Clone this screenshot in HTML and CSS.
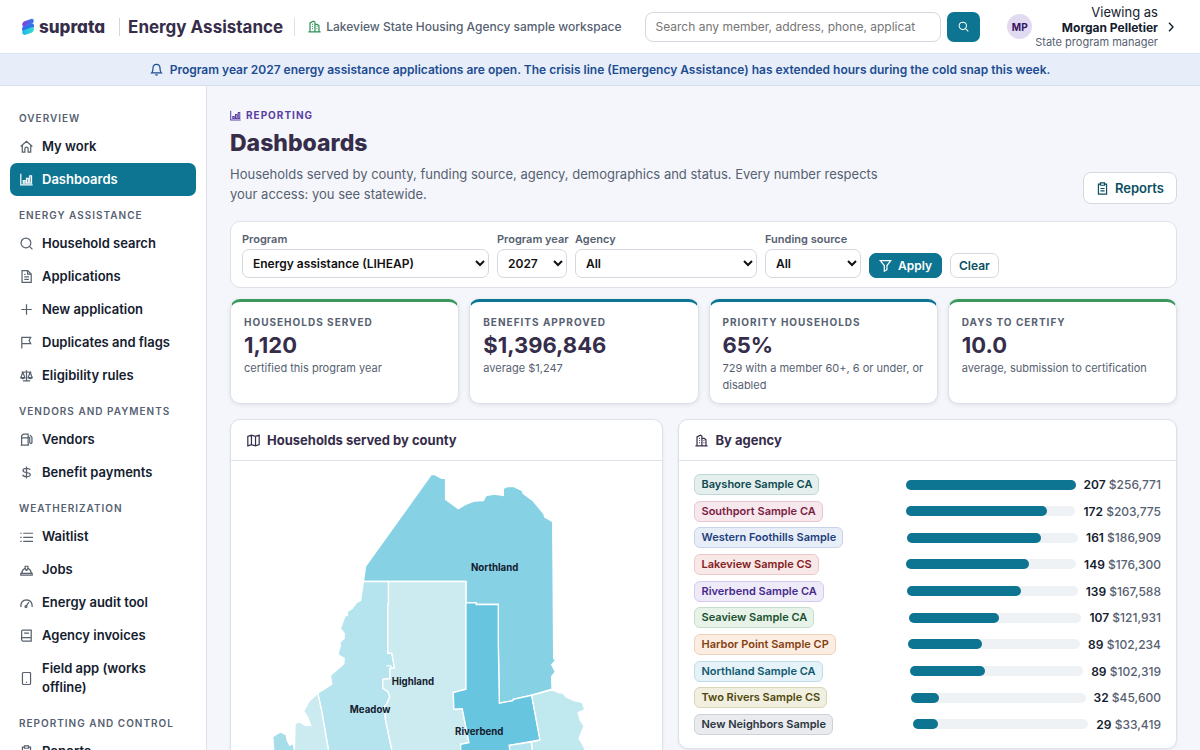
FILE: index.html
```html
<!DOCTYPE html>
<html lang="en">
<head>
<meta charset="utf-8">
<meta name="viewport" content="width=device-width, initial-scale=1">
<title>Dashboards - Energy Assistance</title>
<link rel="stylesheet" href="styles.css">
</head>
<body>
<header class="topbar">
  <a class="brand" href="#">
    <svg class="brand-mark" viewBox="0 0 14 18" aria-hidden="true">
      <defs>
        <linearGradient id="g1" x1="0" x2="1"><stop offset="0" stop-color="#8a3ad6"/><stop offset="1" stop-color="#2b7ff0"/></linearGradient>
        <linearGradient id="g2" x1="0" x2="1"><stop offset="0" stop-color="#1fb6e8"/><stop offset="1" stop-color="#35dcd0"/></linearGradient>
      </defs>
      <path d="M1.500 8 Q.6 4.600 3.500 3.200 L10 .9 Q13 .4 12.800 3.200 Q12.800 4.800 11 5.500 L3.500 8.200 Q2 8.800 1.500 8Z" fill="url(#g1)"/>
      <path d="M2 8.500 L11 5.300 Q13.500 6 12.900 9 Q12.500 10.500 11 11 L3 14 Q1 13.500 1 11 Q1 9.200 2 8.500Z" fill="#2f6fe8"/>
      <path d="M1.200 14.500 Q1 12.600 3 11.900 L11 9.100 Q13 8.800 12.900 11.600 Q12.800 13.700 11 14.400 L4.500 16.800 Q1.500 17.500 1.200 14.500Z" fill="url(#g2)"/>
    </svg>
    <span class="brand-name">suprata</span>
  </a>
  <span class="product">Energy Assistance</span>
  <span class="workspace">
    <svg class="icon green" viewBox="0 0 16 16"><path d="M.5 14.500h15M2.500 14.500v-11l4-2 2 1v12M8.500 5.500h3l2 1.500v7.500M5 5.500h1M5 8h1M5 10.500h1M10.500 8h1M10.500 10.500h1"/></svg>
    Lakeview State Housing Agency sample workspace
  </span>
  <form class="search" onsubmit="return false">
    <input class="search-input" type="text" aria-label="Search" placeholder="Search any member, address, phone, applicat">
    <button class="search-button" aria-label="Search"><svg class="icon" viewBox="0 0 16 16"><circle cx="7" cy="7" r="5.300"/><path d="M11 11l4 4"/></svg></button>
  </form>
  <button class="user">
    <span class="avatar">MP</span>
    <span class="user-text"><span class="viewing">Viewing as</span><strong class="user-name">Morgan Pelletier</strong><span class="user-role">State program manager</span></span>
    <svg class="chevron" viewBox="0 0 8 12"><path d="M2 1.800l4 4.200-4 4.200"/></svg>
  </button>
</header>
<div class="banner">
  <svg class="icon" viewBox="0 0 16 16"><path d="M2 12.200h12c-1.200-1.200-1.700-2-1.700-5.700 0-2.700-1.700-4.800-4.300-4.800S3.700 3.800 3.700 6.500c0 3.700-.5 4.500-1.700 5.700zM6.500 14.500h3"/></svg>
  <span>Program year 2027 energy assistance applications are open. The crisis line (Emergency Assistance) has extended hours during the cold snap this week.</span>
</div>
<div class="shell">
  <nav class="sidebar">
    <h2 class="nav-heading">Overview</h2>
    <a class="nav-item" href="#"><svg class="icon" viewBox="0 0 16 16"><path d="M.8 8L8 1.500 15.200 8M2.800 6.500v8.300h3.200v-4q0-2 2-2t2 2v4h3.200V6.500"/></svg><span>My work</span></a>
    <a class="nav-item active" href="#"><svg class="icon" viewBox="0 0 16 16"><path d="M1 1v13.500h14.500M4 9.500h2.200v3H4zM8 6.500h2.200v6H8zM12 3.500h2.200v9H12z"/></svg><span>Dashboards</span></a>
    <h2 class="nav-heading">Energy assistance</h2>
    <a class="nav-item" href="#"><svg class="icon" viewBox="0 0 16 16"><circle cx="7.300" cy="7.300" r="6"/><path d="M11.600 11.600l3.700 3.700"/></svg><span>Household search</span></a>
    <a class="nav-item" href="#"><svg class="icon" viewBox="0 0 16 16"><path d="M2.500.8h7L13.800 5v10.200H2.500zM9.300 1v4.200h4.300M5.300 8.500h5.700M5.300 11.500h5.700M5.300 5.500h1.500"/></svg><span>Applications</span></a>
    <a class="nav-item" href="#"><svg class="icon" viewBox="0 0 16 16"><path d="M8 1.500v13M1.500 8h13"/></svg><span>New application</span></a>
    <a class="nav-item" href="#"><svg class="icon" viewBox="0 0 16 16"><path d="M2.200 15.500V1.700h11l-2 3.900 2 3.900h-11"/></svg><span>Duplicates and flags</span></a>
    <a class="nav-item" href="#"><svg class="icon" viewBox="0 0 16 16"><path d="M8 1.500v12.500M3.500 14.500h9M2 4h3.500L8 3l2.500 1H14M3.500 4L1 10.500h5zM12.500 4L10 10.500h5zM1 10.500q2.500 3 5 0M10 10.500q2.500 3 5 0"/></svg><span>Eligibility rules</span></a>
    <h2 class="nav-heading">Vendors and payments</h2>
    <a class="nav-item" href="#"><svg class="icon" viewBox="0 0 16 16"><path d="M.8 14.800h10.400M2 14.500V3.500l2-2h6v13M2 6h8M10 4.500l2 1.200v6.300q1.200 1.800 2.700 0V5.500L12.500 2.500"/></svg><span>Vendors</span></a>
    <a class="nav-item" href="#"><svg class="icon" viewBox="0 0 16 16"><path d="M8 .5v15M12.500 4.800C12 3.500 10.500 3 8 3 5.500 3 3.700 3.800 3.700 5.500c0 3.800 9 1.500 9 5 0 1.700-2 2.600-4.700 2.600s-4.300-.7-4.800-2.300"/></svg><span>Benefit payments</span></a>
    <h2 class="nav-heading">Weatherization</h2>
    <a class="nav-item" href="#"><svg class="icon" viewBox="0 0 16 16"><path d="M4 4H16M4 9H16M4 14H16M.3 4H2M.3 9H2M.3 14H2"/></svg><span>Waitlist</span></a>
    <a class="nav-item" href="#"><svg class="icon" viewBox="0 0 16 16"><path d="M1 15h14v-2.300H1zM2 12.500Q3 8 6.300 6.300L7.500 9h1l1.200-2.700Q13 8 14 12.500M6.300 6.500V4h3.400v2.500"/></svg><span>Jobs</span></a>
    <a class="nav-item" href="#"><svg class="icon" viewBox="0 0 16 16"><path d="M1 13.500Q.8 5 8 4.800q7.200.2 7 8.700M7.500 12.500l3.500-5"/><circle cx="7.300" cy="13" r="1.200"/></svg><span>Energy audit tool</span></a>
    <a class="nav-item" href="#"><svg class="icon" viewBox="0 0 16 16"><path d="M3.500 1.500h10.300v13.300H3.500q-1.500 0-1.500-1.500V3q0-1.500 1.500-1.500zM2 12q0-1.500 1.500-1.500h10M5 5h6M5 10.500h6"/></svg><span>Agency invoices</span></a>
    <a class="nav-item" href="#"><svg class="icon" viewBox="0 0 16 16"><rect x="3" y="0.600" width="10" height="14.800" rx="1.500"/><path d="M7.300 12.700h1.400"/></svg><span>Field app (works offline)</span></a>
    <h2 class="nav-heading">Reporting and control</h2>
    <a class="nav-item" href="#"><svg class="icon" viewBox="0 0 16 16"><path d="M5 2.500H3v12.500h10V2.500h-2M5.500 1h5v3h-5zM5.500 8h5M5.500 11h5"/></svg><span>Reports</span></a>
  </nav>
  <main class="content">
    <div class="page-head">
      <div class="page-intro">
        <p class="eyebrow"><svg class="icon" viewBox="0 0 16 16"><path d="M1 1v13.500h14.500M4 9.500h2.200v3H4zM8 6.500h2.200v6H8zM12 3.500h2.200v9H12z"/></svg>Reporting</p>
        <h1 class="title">Dashboards</h1>
        <p class="lede">Households served by county, funding source, agency, demographics and status. Every number respects your access: you see statewide.</p>
      </div>
      <a class="button reports" href="#"><svg class="icon" viewBox="0 0 16 16"><path d="M5 2.500H3v12.500h10V2.500h-2M5.500 1h5v3h-5zM5.500 8h5M5.500 11h5"/></svg>Reports</a>
    </div>
    <form class="filters" onsubmit="return false">
      <label class="field program">Program<select><option>Energy assistance (LIHEAP)</option></select></label>
      <label class="field year">Program year<select><option>2027</option></select></label>
      <label class="field agency">Agency<select><option>All</option></select></label>
      <label class="field funding">Funding source<select><option>All</option></select></label>
      <button class="button small primary"><svg class="icon" viewBox="0 0 16 16"><path d="M1.500 2h13l-4.700 6v5.200L6.500 15V8z"/></svg>Apply</button>
      <button class="button small" type="reset">Clear</button>
    </form>
    <section class="kpis">
      <article class="kpi good"><h2 class="kpi-label">Households served</h2><p class="kpi-value">1,120</p><p class="kpi-note">certified this program year</p></article>
      <article class="kpi"><h2 class="kpi-label">Benefits approved</h2><p class="kpi-value">$1,396,846</p><p class="kpi-note">average $1,247</p></article>
      <article class="kpi"><h2 class="kpi-label">Priority households</h2><p class="kpi-value">65%</p><p class="kpi-note">729 with a member 60+, 6 or under, or disabled</p></article>
      <article class="kpi good"><h2 class="kpi-label">Days to certify</h2><p class="kpi-value">10.0</p><p class="kpi-note">average, submission to certification</p></article>
    </section>
    <div class="panels">
      <section class="panel">
        <h2 class="panel-title"><svg class="icon" viewBox="0 0 16 16"><path d="M1 3l4.500-1.500 5 1.500L15 1.500V13l-4.500 1.500-5-1.500L1 14.500zM5.500 1.500V13M10.500 3v11.500"/></svg>Households served by county</h2>
        <div class="panel-body">
          <svg class="map" viewBox="80 190 1197 960" role="img" aria-label="County map">
            <path fill="#86d1e4" d="M632 195L643 195 662 205 675 207 675 269 713 297 735 284 760 274 788 273 796 258 820 253 848 257 848 236 860 231 880 231 905 243 908 252 938 274 970 313 972 322 996 336 999 746 1005 752 993 764 1004 786 993 800 994 838 935 855 878 868 877 872 836 880 833 700 833 584 767 584 767 579 736 579 736 515 429 515 435 470Z"/>
            <path fill="#b5e4ee" d="M429 515L504 515 504 580 502 582 502 730 514 730 522 774 508 776 508 806 487 808 487 835 502 845 508 860 500 880 492 890 495 930 514 1020 530 1150 345 1150 324 1020 303 900 292 850 334 823 330 797 352 777 370 762 371 745 356 737 353 730 360 707 358 698 371 686 371 670 360 656 373 620 381 616 381 605 395 596 408 578 420 572Z"/>
            <path fill="#cbebf1" d="M504 515L736 515 736 838 698 848 700 898 725 896 745 998 720 1003 723 1150 530 1150 514 1020 495 930 492 890 500 880 508 860 502 845 487 835 487 808 508 806 508 776 522 774 514 730 502 730 502 582 504 580Z"/>
            <path fill="none" d="M498 768L510 768 514 776"/>
            <path fill="#68c5df" d="M736 579L767 579 767 584 833 584 833 700 836 880 877 872 878 868 933 856 958 990 866 1006 880 1150 723 1150 720 1003 745 998 725 896 700 898 698 848 736 838Z"/>
            <path fill="#c0e8ef" d="M933 856L994 840 1018 850 1022 846 1038 862 1060 872 1085 878 1092 900 1072 908 1078 930 1090 948 1075 985 1092 1015 1060 1150 950 1150 932 996 958 990Z"/>
            <path fill="#b5e4ee" d="M866 1006L932 996 950 1150 880 1150Z"/>
            <path fill="#cbebf1" d="M292 850L303 900 324 1020 345 1150 235 1150 222 1020 224 942 236 935 255 946 271 947 262 922 250 904 265 875Z"/>
            <path fill="#a5dde9" d="M157 980L180 966 197 974 200 990 208 1006 218 1000 222 1020 235 1150 180 1150 160 1020Z"/>
            <g class="map-labels"><text x="822" y="485">Northland</text><text x="577" y="826">Highland</text><text x="449" y="909">Meadow</text><text x="776" y="975">Riverbend</text></g>
          </svg>
        </div>
      </section>
      <section class="panel">
        <h2 class="panel-title"><svg class="icon" viewBox="0 0 16 16"><path d="M.5 14.500h15M2.500 14.500v-11l4-2 2 1v12M8.500 5.500h3l2 1.500v7.500M5 5.500h1M5 8h1M5 10.500h1M10.500 8h1M10.500 10.500h1"/></svg>By agency</h2>
        <ul class="agency-list">
          <li class="row"><span class="cell"><span class="tag a1">Bayshore Sample CA</span></span><span class="track"><span class="fill" style="width:100%"></span></span><span class="amount"><b>207</b> $256,771</span></li>
          <li class="row"><span class="cell"><span class="tag a2">Southport Sample CA</span></span><span class="track"><span class="fill" style="width:83%"></span></span><span class="amount"><b>172</b> $203,775</span></li>
          <li class="row"><span class="cell"><span class="tag a3">Western Foothills Sample</span></span><span class="track"><span class="fill" style="width:78%"></span></span><span class="amount"><b>161</b> $186,909</span></li>
          <li class="row"><span class="cell"><span class="tag a4">Lakeview Sample CS</span></span><span class="track"><span class="fill" style="width:72%"></span></span><span class="amount"><b>149</b> $176,300</span></li>
          <li class="row"><span class="cell"><span class="tag a5">Riverbend Sample CA</span></span><span class="track"><span class="fill" style="width:67%"></span></span><span class="amount"><b>139</b> $167,588</span></li>
          <li class="row"><span class="cell"><span class="tag a6">Seaview Sample CA</span></span><span class="track"><span class="fill" style="width:52%"></span></span><span class="amount"><b>107</b> $121,931</span></li>
          <li class="row"><span class="cell"><span class="tag a7">Harbor Point Sample CP</span></span><span class="track"><span class="fill" style="width:43%"></span></span><span class="amount"><b>89</b> $102,234</span></li>
          <li class="row"><span class="cell"><span class="tag a8">Northland Sample CA</span></span><span class="track"><span class="fill" style="width:43%"></span></span><span class="amount"><b>89</b> $102,319</span></li>
          <li class="row"><span class="cell"><span class="tag a9">Two Rivers Sample CS</span></span><span class="track"><span class="fill" style="width:16%"></span></span><span class="amount"><b>32</b> $45,600</span></li>
          <li class="row"><span class="cell"><span class="tag a10">New Neighbors Sample</span></span><span class="track"><span class="fill" style="width:14%"></span></span><span class="amount"><b>29</b> $33,419</span></li>
        </ul>
      </section>
    </div>
  </main>
</div>
</body>
</html>
```
FILE: styles.css
```css
:root {
  --teal: #0d7491;
  --ink: #14202e;
  --heading: #362d4a;
  --muted: #566171;
  --line: #dde1e8;
  --page: #f4f6fb;
}
* { box-sizing: border-box; }
html { scrollbar-width: none; }
body {
  margin: 0;
  min-height: 100vh;
  display: flex;
  flex-direction: column;
  font-family: Inter, "Liberation Sans", sans-serif;
  font-size: 13px;
  color: var(--ink);
  background: var(--page);
}
h1, h2, p, ul { margin: 0; padding: 0; }
a { color: inherit; text-decoration: none; }
button, input, select { font: inherit; color: inherit; }
.icon {
  width: 13px;
  height: 13px;
  flex: none;
  fill: none;
  stroke: currentColor;
  stroke-width: 1.5;
}

.topbar {
  display: flex;
  align-items: center;
  height: 53px;
  padding: 0 25px 0 21px;
  background: #fff;
  white-space: nowrap;
}
.brand { display: flex; align-items: center; gap: 4px; }
.brand-mark { width: 14px; height: 18px; }
.brand-name {
  font-size: 17px;
  line-height: 20px;
  font-weight: 800;
  color: var(--heading);
  font-feature-settings: "cv11";
}
.product {
  margin-left: 14px;
  padding-left: 8px;
  border-left: 1px solid #d3d6de;
  font-size: 17px;
  line-height: 18px;
  font-weight: 700;
  color: var(--heading);
}
.workspace {
  display: flex;
  align-items: center;
  gap: 5px;
  margin-left: 11px;
  padding-left: 13px;
  border-left: 1px solid var(--line);
  line-height: 18px;
  font-size: 12px;
  font-weight: 500;
  color: var(--muted);
}
.green { color: #2f9158; }
.search { display: flex; flex: 1; gap: 6px; margin-left: 24px; }
.search-input {
  flex: 1;
  min-width: 0;
  height: 30px;
  padding: 0 12px 0 9px;
  border: 1px solid #d5d8de;
  border-radius: 8px;
  background: #fff;
  font-size: 12px;
}
.search-input::placeholder { color: #757575; opacity: 1; }
.search-button {
  display: grid;
  place-items: center;
  width: 33px;
  height: 30px;
  padding: 0;
  border: 0;
  border-radius: 7px;
  background: var(--teal);
  color: #fff;
}
.search-button .icon { width: 11px; height: 11px; }
.user {
  display: flex;
  align-items: center;
  gap: 3px;
  margin-left: 27px;
  padding: 0;
  border: 0;
  background: none;
  text-align: right;
}
.avatar {
  display: grid;
  place-items: center;
  width: 25px;
  height: 25px;
  border-radius: 50%;
  background: #e2daf1;
  font-size: 10px;
  font-weight: 700;
  color: #34155f;
}
.user-text { display: flex; flex-direction: column; }
.viewing { font-size: 13px; line-height: 15px; }
.user-name { font-size: 12px; line-height: 15px; font-weight: 700; }
.user-role { font-size: 11px; line-height: 14px; color: var(--muted); }
.chevron {
  width: 8px;
  height: 12px;
  margin-left: 6px;
  fill: none;
  stroke: currentColor;
  stroke-width: 1.4;
}

.banner {
  display: flex;
  align-items: center;
  justify-content: center;
  gap: 7px;
  height: 33px;
  border-top: 1px solid #dfe7f4;
  border-bottom: 1px solid #d5dff0;
  background: #e7eefa;
  font-size: 12px;
  font-weight: 600;
  color: #1d4c90;
}

.shell { display: flex; flex: 1; }
.sidebar {
  width: 207px;
  flex: none;
  padding: 13px 10px;
  border-right: 1px solid var(--line);
  background: #fff;
}
.nav-heading {
  padding: 11px 9px 4px;
  font-size: 10px;
  line-height: 16px;
  font-weight: 600;
  letter-spacing: 1px;
  text-transform: uppercase;
  color: var(--muted);
}
.nav-item {
  display: flex;
  align-items: center;
  gap: 9px;
  padding: 7px 15px 7px 10px;
  border-radius: 7px;
  font-size: 13px;
  line-height: 19px;
  font-weight: 600;
}
.nav-item .icon { color: #58616e; }
.nav-item.active, .nav-item.active .icon { color: #fff; }
.nav-item.active { background: var(--teal); }

.content { flex: 1; min-width: 0; padding: 21px 23px 24px; }
.page-head {
  display: flex;
  align-items: flex-end;
  justify-content: space-between;
  gap: 24px;
}
.page-intro { max-width: 665px; }
.eyebrow {
  display: flex;
  align-items: center;
  gap: 5px;
  font-size: 10px;
  line-height: 16px;
  font-weight: 700;
  letter-spacing: 1px;
  text-transform: uppercase;
  color: #5a3ea6;
}
.eyebrow .icon { width: 11px; height: 11px; }
.title {
  margin: 5px 0 6px;
  font-size: 23px;
  line-height: 30px;
  font-weight: 800;
  color: var(--heading);
}
.lede { font-size: 13px; line-height: 20px; color: var(--muted); }
.button {
  display: inline-flex;
  align-items: center;
  justify-content: center;
  gap: 6px;
  border: 1px solid #d5d8de;
  border-radius: 8px;
  background: #fff;
  font-weight: 600;
  color: #0b4f63;
}
.reports { height: 32px; padding: 0 12px; font-size: 13px; }
.small { height: 25px; padding: 0 8px; border-radius: 7px; font-size: 12px; }
.primary {
  padding: 0 9px;
  border-color: var(--teal);
  background: var(--teal);
  color: #fff;
}

.filters {
  display: flex;
  align-items: flex-end;
  gap: 8px;
  margin-top: 17px;
  padding: 10px 11px 9px;
  border: 1px solid var(--line);
  border-radius: 10px;
  background: #fff;
}
.field {
  display: flex;
  flex-direction: column;
  gap: 3px;
  font-size: 11px;
  line-height: 14px;
  font-weight: 600;
  white-space: nowrap;
  color: var(--muted);
}
.field select {
  width: 100%;
  height: 29px;
  padding: 0 6px;
  border: 1px solid #d5d8de;
  border-radius: 7px;
  background: #fff;
  font-size: 12px;
  color: #111;
}
.program { width: 247px; }
.year { width: 70px; }
.agency { width: 182px; }
.funding { width: 96px; }

.kpis {
  display: grid;
  grid-template-columns: repeat(4, 1fr);
  gap: 10px;
  margin-top: 11px;
}
.kpi {
  padding: 12px 13px 9px;
  border: 1px solid var(--line);
  border-top: 3px solid var(--teal);
  border-radius: 10px;
  background: #fff;
  box-shadow: 0 1px 4px rgba(30, 40, 60, 0.1);
}
.kpi.good { border-top-color: #3a985c; }
.kpi-label {
  font-size: 10px;
  line-height: 16px;
  font-weight: 700;
  letter-spacing: 1px;
  text-transform: uppercase;
  color: var(--muted);
}
.kpi-value {
  font-size: 22px;
  line-height: 30px;
  font-weight: 700;
  color: var(--heading);
}
.kpi-note { font-size: 11px; line-height: 17px; color: var(--muted); }

.panels {
  display: grid;
  grid-template-columns: 1fr 1.15fr;
  align-items: start;
  gap: 15px;
  margin-top: 15px;
}
.panel {
  border: 1px solid var(--line);
  border-radius: 10px;
  background: #fff;
  box-shadow: 0 1px 3px rgba(30, 40, 60, 0.08);
}
.panel-title {
  display: flex;
  align-items: center;
  gap: 7px;
  height: 41px;
  padding: 0 16px;
  border-bottom: 1px solid var(--line);
  font-size: 13px;
  font-weight: 700;
  color: var(--heading);
}
.panel-body { padding: 12px 16px; }
.map { display: block; width: 100%; height: auto; stroke: #fff; stroke-width: 4; }
.map-labels {
  font-size: 29px;
  font-weight: 700;
  text-anchor: middle;
  fill: #14202e;
  stroke: none;
}

.agency-list {
  display: flex;
  flex-direction: column;
  justify-content: space-between;
  min-height: 287px;
  padding: 13px 15px;
  list-style: none;
}
.row {
  display: grid;
  grid-template-columns: 1.2fr 1fr auto;
  align-items: center;
  gap: 8px;
}
.cell { display: flex; }
.tag {
  padding: 2px 6px;
  border: 1px solid;
  border-radius: 6px;
  font-size: 11px;
  line-height: 15px;
  font-weight: 600;
  white-space: nowrap;
}
.a1 { background: #e5efee; border-color: #bfd8d6; color: #0f4a50; }
.a2 { background: #f7e8ed; border-color: #e8c6d1; color: #7a1d43; }
.a3 { background: #e8eef8; border-color: #c6d3e8; color: #1d3f7d; }
.a4 { background: #f8e9e8; border-color: #ebc9c7; color: #84201c; }
.a5 { background: #eeeaf8; border-color: #d5cbee; color: #472b8c; }
.a6 { background: #e7f2e9; border-color: #c5dfca; color: #19502e; }
.a7 { background: #fbede2; border-color: #eed2bb; color: #85400f; }
.a8 { background: #e5f2f7; border-color: #bedde8; color: #105a72; }
.a9 { background: #f1efdf; border-color: #dad5b4; color: #4f480c; }
.a10 { background: #e9ebee; border-color: #ced2d8; color: #2c3541; }
.track { height: 10px; border-radius: 5px; background: #eff2f5; }
.fill { display: block; height: 100%; border-radius: 5px; background: var(--teal); }
.amount { font-size: 12px; line-height: 15px; font-weight: 500; color: var(--muted); }
.amount b { font-weight: 600; color: var(--ink); }
```
